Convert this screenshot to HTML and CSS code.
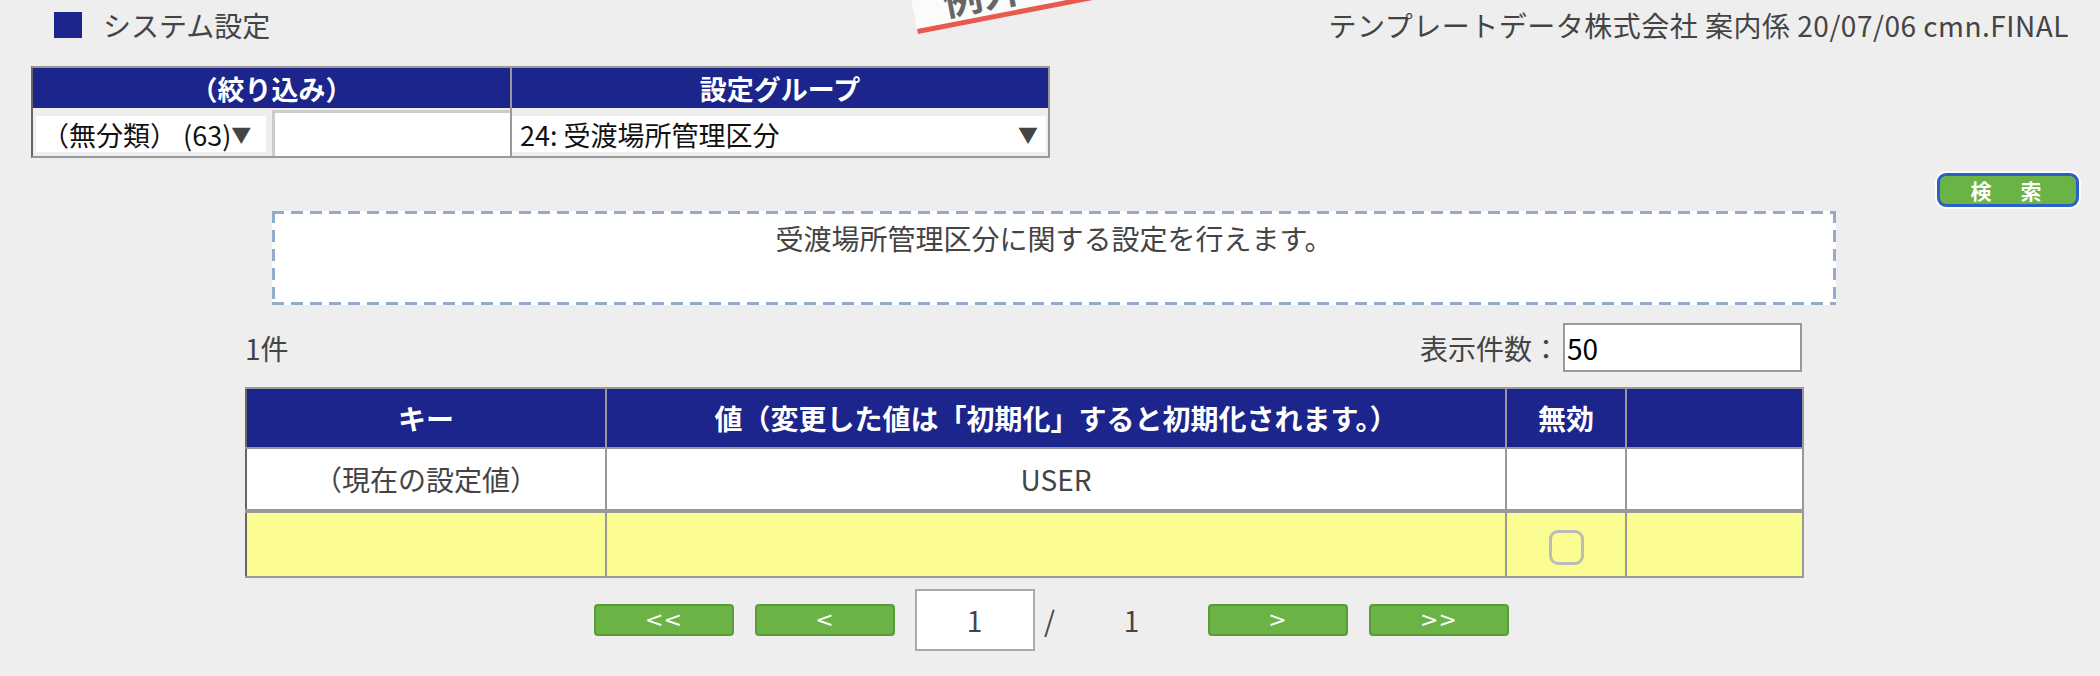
FILE: index.html
```html
<!DOCTYPE html>
<html lang="ja">
<head>
<meta charset="utf-8">
<title>システム設定</title>
<link rel="stylesheet" href="styles.css">
</head>
<body>
<div class="stamp"><span class="stamp-text">例外</span></div>

<header class="topbar">
  <div class="title"><span class="title-mark"></span><span class="title-text">システム設定</span></div>
  <div class="userinfo">テンプレートデータ株式会社 案内係 20/07/06 cmn.FINAL</div>
</header>

<section class="filter">
  <div class="filter-head">
    <div class="fh fh-left">（絞り込み）</div>
    <div class="fh fh-right">設定グループ</div>
  </div>
  <div class="filter-body">
    <div class="fcell-left">
      <div class="select select-cat"><span>（無分類） (63)</span><span class="arrow">▼</span></div>
      <div class="text-input"></div>
    </div>
    <div class="fcell-right">
      <div class="select select-group"><span>24: 受渡場所管理区分</span><span class="arrow arrow-far">▼</span></div>
    </div>
  </div>
</section>

<div class="search-row">
  <button class="search-btn" type="button">検　索</button>
</div>

<div class="desc">受渡場所管理区分に関する設定を行えます。</div>

<div class="count-row">
  <span class="count">1件</span>
  <div class="per-page"><span class="per-label">表示件数：</span><div class="per-input">50</div></div>
</div>

<table class="grid">
  <colgroup>
    <col class="c1"><col class="c2"><col class="c3"><col class="c4">
  </colgroup>
  <thead>
    <tr class="head">
      <th>キー</th>
      <th>値（変更した値は「初期化」すると初期化されます。）</th>
      <th>無効</th>
      <th></th>
    </tr>
  </thead>
  <tbody>
    <tr class="current">
      <td>（現在の設定値）</td>
      <td>USER</td>
      <td></td>
      <td></td>
    </tr>
    <tr class="edit">
      <td></td>
      <td></td>
      <td><span class="checkbox"></span></td>
      <td></td>
    </tr>
  </tbody>
</table>

<nav class="pager">
  <button class="pg-btn" type="button">&lt;&lt;</button>
  <button class="pg-btn" type="button">&lt;</button>
  <div class="pg-input">1</div>
  <span class="pg-slash">/</span>
  <span class="pg-total">1</span>
  <button class="pg-btn pg-next" type="button">&gt;</button>
  <button class="pg-btn" type="button">&gt;&gt;</button>
</nav>
</body>
</html>
```

FILE: styles.css
```css
html, body {
  margin: 0;
  padding: 0;
}
body {
  width: 2100px;
  height: 676px;
  overflow: hidden;
  position: relative;
  background: #eeeeee;
  font-family: "Noto Sans CJK JP", "Noto Sans", sans-serif;
  font-size: 28px;
  color: #444444;
}

/* stamp overlay */
.stamp {
  position: absolute;
  left: 918px;
  top: -46px;
  width: 230px;
  height: 80px;
  box-sizing: border-box;
  background: #fbfbfb;
  border-bottom: 5px solid #e85a4e;
  transform: rotate(-11deg);
  transform-origin: bottom left;
  z-index: 5;
}
.stamp-text {
  position: absolute;
  left: 30px;
  bottom: 4px;
  font-size: 40px;
  font-weight: bold;
  color: #666666;
  line-height: 1;
}

/* top bar */
.topbar {
  height: 50px;
  display: flex;
  align-items: center;
  justify-content: space-between;
  padding: 0 31px 0 54px;
}
.title {
  display: flex;
  align-items: center;
}
.title-mark {
  width: 28px;
  height: 26px;
  background: #1c258c;
  margin-right: 21px;
}
.title-text {
  line-height: 1;
}
.userinfo {
  line-height: 1;
  letter-spacing: 0.5px;
}

/* filter */
.filter {
  margin: 16px 0 0 31px;
  width: 1019px;
  box-sizing: border-box;
  border-top: 2px solid #999999;
  border-left: 2px solid #666666;
  border-right: 2px solid #999999;
  border-bottom: 2px solid #999999;
}
.filter-head {
  display: flex;
  height: 40px;
  background: #1c258c;
  color: #ffffff;
  font-weight: bold;
  font-size: 27px;
}
.fh {
  display: flex;
  align-items: center;
  justify-content: center;
}
.fh-left {
  width: 477px;
  border-right: 2px solid #999999;
}
.fh-right {
  flex: 1;
}
.filter-body {
  display: flex;
  height: 48px;
}
.fcell-left {
  width: 477px;
  display: flex;
  border-right: 2px solid #999999;
}
.fcell-right {
  flex: 1;
  display: flex;
}
.select {
  background: #ffffff;
  color: #111111;
  height: 36px;
  margin-top: 8px;
  display: flex;
  align-items: center;
  box-sizing: border-box;
  font-size: 27px;
  white-space: nowrap;
}
.select-cat {
  width: 230px;
  margin-left: 3px;
  padding-left: 6px;
}
.select-group {
  width: 534px;
  padding-left: 8px;
  justify-content: space-between;
}
.arrow {
  color: #444444;
  font-size: 20px;
}
.arrow-far {
  margin-right: 8px;
}
.text-input {
  margin: 2px 0 0 6px;
  flex: 1;
  background: #ffffff;
  border: 3px solid #cccccc;
  border-right: 0;
  border-bottom: 0;
}

/* search */
.search-row {
  display: flex;
  justify-content: flex-end;
  padding-right: 21px;
  margin-top: 15px;
}
.search-btn {
  width: 142px;
  height: 34px;
  box-sizing: border-box;
  background: #6cb346;
  border: 3px solid #2b5fc9;
  border-radius: 9px;
  box-shadow: 0 0 0 2px #ffffff;
  color: #ffffff;
  font-family: inherit;
  font-weight: bold;
  font-size: 21px;
  letter-spacing: 4px;
  line-height: 1;
  padding: 0;
}

/* description */
.desc {
  margin: 4px 0 0 272px;
  width: 1564px;
  height: 94px;
  box-sizing: border-box;
  background:
    repeating-linear-gradient(90deg, #94abcb 0 12px, transparent 12px 19px) left top / 100% 3px no-repeat,
    repeating-linear-gradient(90deg, #94abcb 0 12px, transparent 12px 19px) left bottom / 100% 3px no-repeat,
    repeating-linear-gradient(180deg, #94abcb 0 12px, transparent 12px 19px) left top / 3px 100% no-repeat,
    repeating-linear-gradient(180deg, #94abcb 0 12px, transparent 12px 19px) right top / 3px 100% no-repeat,
    #ffffff;
  text-align: center;
  padding-top: 9px;
  line-height: 1.3;
}

/* count row */
.count-row {
  margin: 18px 0 0 245px;
  width: 1557px;
  height: 49px;
  display: flex;
  align-items: center;
  justify-content: space-between;
}
.per-page {
  display: flex;
  align-items: center;
}
.per-label {
  margin-right: 3px;
}
.per-input {
  width: 239px;
  height: 49px;
  box-sizing: border-box;
  border: 2px solid #999999;
  background: #ffffff;
  color: #000000;
  padding-left: 2px;
  display: flex;
  align-items: center;
}

/* main grid */
.grid {
  margin: 15px 0 0 245px;
  width: 1557px;
  table-layout: fixed;
  border-collapse: collapse;
}
.c1 { width: 360px; }
.c2 { width: 900px; }
.c3 { width: 120px; }
.c4 { width: 177px; }
.grid th, .grid td {
  border: 2px solid #999999;
  padding: 0;
  text-align: center;
  vertical-align: middle;
}
.grid th:first-child, .grid td:first-child {
  border-left-color: #666666;
}
.head th {
  background: #1c258c;
  color: #ffffff;
  font-weight: bold;
  height: 58px;
}
.current td {
  background: #ffffff;
  height: 60px;
}
.edit td {
  background: #fbfc92;
  height: 63px;
  border-top: 4px solid #999999;
}
.checkbox {
  display: inline-block;
  width: 35px;
  height: 35px;
  box-sizing: border-box;
  border: 3px solid #bbbbbb;
  border-radius: 9px;
  background: #fbfc92;
  vertical-align: middle;
}

/* pager */
.pager {
  margin-top: 11px;
  padding-left: 2px;
  display: flex;
  justify-content: center;
  align-items: center;
}
.pg-btn {
  width: 140px;
  height: 32px;
  box-sizing: border-box;
  background: #6cb346;
  border: 2px solid #5a9b3a;
  border-radius: 4px;
  color: #ffffff;
  font-family: "DejaVu Sans", sans-serif;
  font-size: 22px;
  line-height: 1;
  padding: 0;
  margin-right: 21px;
}
.pg-input {
  width: 120px;
  height: 62px;
  box-sizing: border-box;
  border: 2px solid #aaaaaa;
  background: #ffffff;
  display: flex;
  align-items: center;
  justify-content: center;
  margin-left: -1px;
}
.pg-slash {
  width: 30px;
  text-align: center;
}
.pg-total {
  width: 134px;
  text-align: center;
}
.pg-next {
  margin-left: 9px;
}
.pager .pg-btn:last-child {
  margin-right: 0;
}
```
